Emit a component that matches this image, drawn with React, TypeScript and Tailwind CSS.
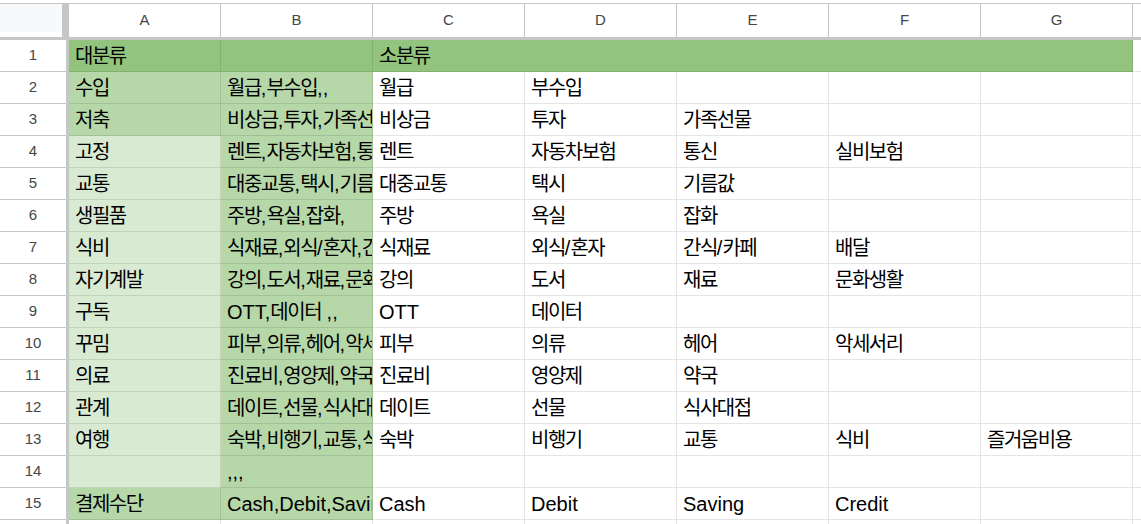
import React from "react";

const COLS = ["A", "B", "C", "D", "E", "F", "G"];

const rows: string[][] = [
  ["수입", "월급,부수입,,", "월급", "부수입"],
  ["저축", "비상금,투자,가족선물,", "비상금", "투자", "가족선물"],
  ["고정", "렌트,자동차보험,통신,실비보험", "렌트", "자동차보험", "통신", "실비보험"],
  ["교통", "대중교통,택시,기름값,", "대중교통", "택시", "기름값"],
  ["생필품", "주방,욕실,잡화,", "주방", "욕실", "잡화"],
  ["식비", "식재료,외식/혼자,간식/카페,배달", "식재료", "외식/혼자", "간식/카페", "배달"],
  ["자기계발", "강의,도서,재료,문화생활", "강의", "도서", "재료", "문화생활"],
  ["구독", "OTT,데이터 ,,", "OTT", "데이터"],
  ["꾸밈", "피부,의류,헤어,악세서리", "피부", "의류", "헤어", "악세서리"],
  ["의료", "진료비,영양제,약국,", "진료비", "영양제", "약국"],
  ["관계", "데이트,선물,식사대접,", "데이트", "선물", "식사대접"],
  ["여행", "숙박,비행기,교통,식비,즐거움비용", "숙박", "비행기", "교통", "식비", "즐거움비용"],
  ["", ",,,"],
  ["결제수단", "Cash,Debit,Saving,Credit", "Cash", "Debit", "Saving", "Credit"],
];

// hangul gets tighter tracking so it takes the width of the reference glyphs
const Txt = ({ s }: { s: string }) => (
  <>
    {s.split(/([\uAC00-\uD7A3\u3131-\u318E]+)/).map((part, i) =>
      /[\uAC00-\uD7A3]/.test(part) ? (
        <span key={i} className="text-[20px] tracking-[-1.5px]">
          {part}
        </span>
      ) : (
        <React.Fragment key={i}>{part}</React.Fragment>
      )
    )}
  </>
);

const Cell = ({ text, bg, w = "w-[152px]" }: { text?: string; bg?: string; w?: string }) => (
  <div
    className={`${w} shrink-0 h-full flex items-end pl-[6px] pb-[3px] overflow-hidden whitespace-nowrap border-b border-r border-black/10 ${
      bg ?? "bg-white"
    }`}
  >
    {text ? (
      <span className="leading-[23px]">
        <Txt s={text} />
      </span>
    ) : null}
  </div>
);

const RowNum = ({ n }: { n: number }) => (
  <>
    <div className="w-[66px] shrink-0 h-full flex items-center justify-center border-b border-[#c4c7c5] text-[15px] text-[#444746]">
      {n}
    </div>
    <div className="w-[3px] shrink-0 h-full bg-[#c4c7c5]" />
  </>
);

export default function App() {
  return (
    <div
      className="w-[1141px] h-[524px] overflow-hidden bg-white text-black text-[20px]"
      style={{ fontFamily: '"Liberation Sans", Arial, "Noto Sans CJK KR", sans-serif' }}
    >
      <div className="h-[3px]" />
      <div className="h-px bg-[#c4c7c5]" />
      {/* column letters */}
      <div className="flex h-[33px]">
        <div className="w-[62px] shrink-0 h-[28px] bg-[#f8f9fa]" />
        <div className="w-[7px] shrink-0 h-full bg-[#c4c7c5]" />
        {COLS.map((c) => (
          <div
            key={c}
            className="w-[152px] shrink-0 h-full flex items-center justify-center border-r border-[#c4c7c5] text-[15px] text-[#444746]"
          >
            {c}
          </div>
        ))}
        <div className="flex-1" />
      </div>
      <div className="h-[3px] bg-[#c4c7c5]" />

      {/* row 1 */}
      <div className="flex h-[32px]">
        <RowNum n={1} />
        <Cell text="대분류" bg="bg-[#93c47d]" />
        <Cell bg="bg-[#93c47d]" />
        <Cell text="소분류" bg="bg-[#93c47d]" w="w-[760px]" />
        <div className="flex-1 h-full border-b border-black/10" />
      </div>

      {rows.map((r, i) => {
        const n = i + 2;
        const aBg = n === 2 || n === 3 || n === 15 ? "bg-[#b6d7a8]" : "bg-[#d9ead3]";
        return (
          <div key={n} className="flex h-[32px]">
            <RowNum n={n} />
            <Cell text={r[0]} bg={aBg} />
            <Cell text={r[1]} bg="bg-[#b6d7a8]" />
            {[2, 3, 4, 5, 6].map((k) => (
              <Cell key={k} text={r[k]} />
            ))}
            <div className="flex-1 h-full border-b border-black/10" />
          </div>
        );
      })}

      <div className="flex h-[32px]">
        <RowNum n={16} />
        {[0, 1, 2, 3, 4, 5, 6].map((k) => (
          <Cell key={k} />
        ))}
        <div className="flex-1 h-full border-b border-black/10" />
      </div>
    </div>
  );
}
